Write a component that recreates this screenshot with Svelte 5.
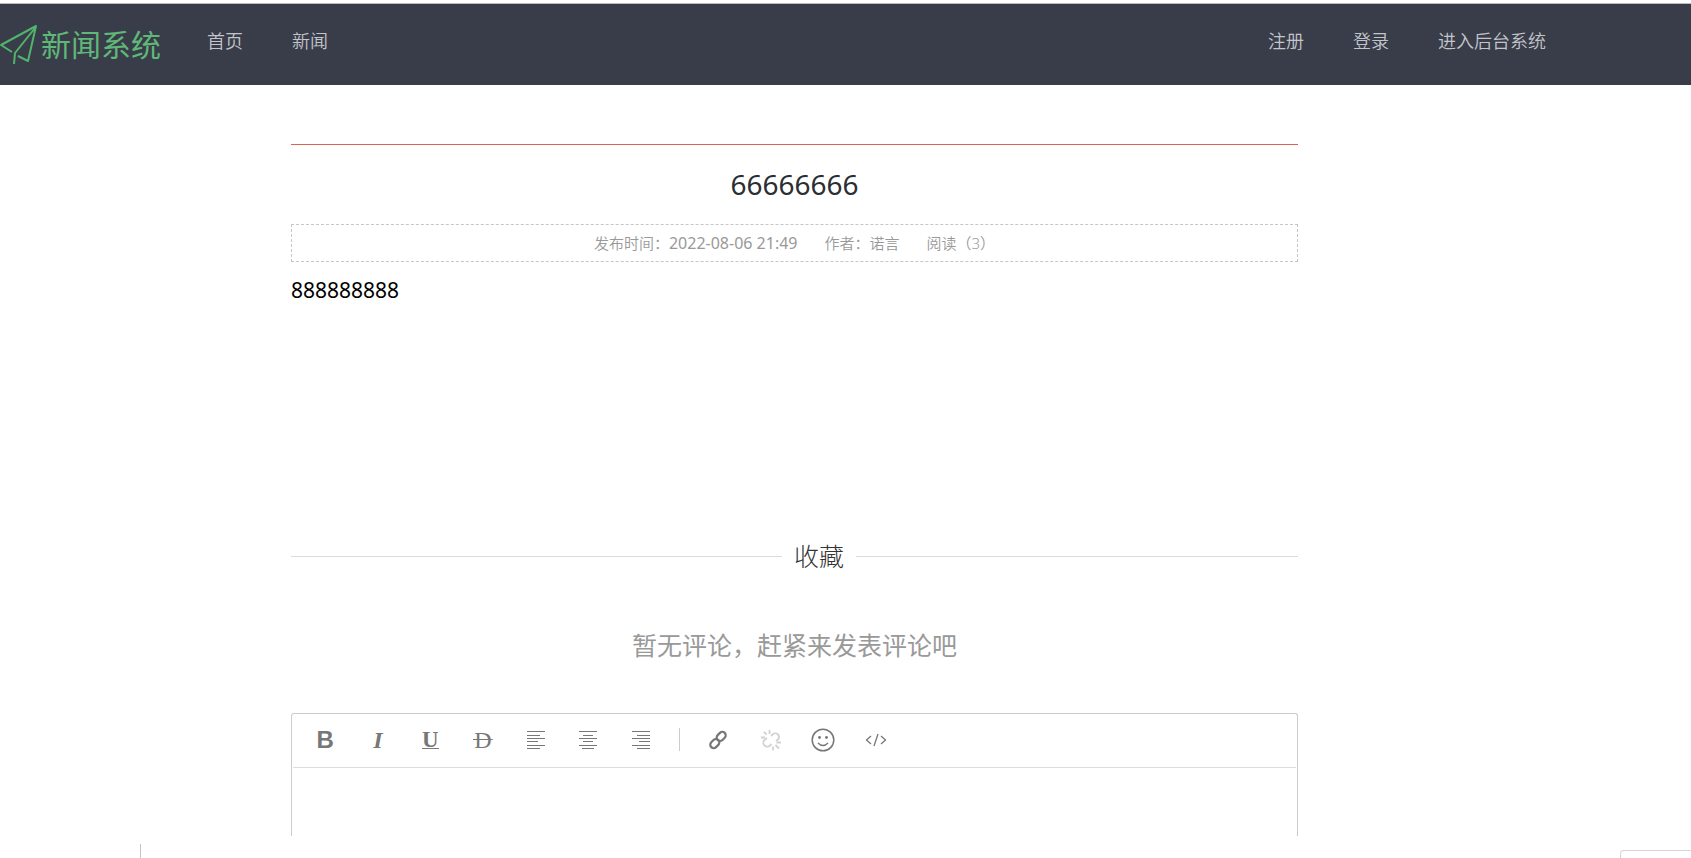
<script>
  const mainLinks = ['首页', '新闻'];
  const userLinks = ['注册', '登录', '进入后台系统'];

  const aligns = [
    { label: '左对齐', rows: [[1, 19], [1, 14], [1, 19], [1, 12], [1, 19], [1, 14]] },
    { label: '居中对齐', rows: [[1, 19], [5, 15], [1, 19], [5, 15], [1, 19], [4, 16]] },
    { label: '右对齐', rows: [[1, 19], [6, 19], [1, 19], [8, 19], [1, 19], [6, 19]] }
  ];

  let draft = $state('');
</script>

<header>
  <a class="logo" href="#home">
    <svg width="38" height="44" viewBox="0 0 38 44" aria-hidden="true">
      <path d="M12 29 L1 22 L36 3 L28 38 L18 33 M35 5 L15 30 L14 41" />
    </svg>
    <span>新闻系统</span>
  </a>
  <nav class="main" aria-label="主导航">
    {#each mainLinks as link}<a href="#nav">{link}</a>{/each}
  </nav>
  <nav class="user" aria-label="用户">
    {#each userLinks as link}<a href="#user">{link}</a>{/each}
  </nav>
</header>

<main>
  <article>
    <h1>66666666</h1>
    <p class="meta">
      <span>发布时间：<time>2022-08-06 21:49</time></span>
      <span>作者：诺言</span>
      <span>阅读（3）</span>
    </p>
    <div class="content">888888888</div>
  </article>

  <div class="divider"><button type="button">收藏</button></div>

  <p class="empty">暂无评论，赶紧来发表评论吧</p>

  <section class="editor" aria-label="评论编辑器">
    <div class="toolbar">
      <div class="group text">
        <button type="button" class="bold" aria-label="加粗">B</button>
        <button type="button" class="italic" aria-label="斜体">I</button>
        <button type="button" class="under" aria-label="下划线"><span>U</span></button>
        <button type="button" class="strike" aria-label="删除线"><span>D</span></button>
        {#each aligns as align}
          <button type="button" aria-label={align.label}>
            <svg width="20" height="20" viewBox="0 0 20 20">
              {#each align.rows as [from, to], i}
                <path class="row" d="M{from} {[1, 5, 8, 11, 15, 18][i]}.5H{to}" />
              {/each}
            </svg>
          </button>
        {/each}
      </div>
      <span class="sep"></span>
      <div class="group insert">
        <button type="button" aria-label="插入链接">
          <svg width="20" height="20" viewBox="0 0 20 20" class="link">
            <rect x="-5" y="-3.4" width="10" height="6.8" rx="3.4" transform="translate(13.2 6.4) rotate(-45)" />
            <rect x="-5" y="-3.4" width="10" height="6.8" rx="3.4" transform="translate(6.8 13.6) rotate(-45)" />
          </svg>
        </button>
        <button type="button" disabled aria-label="取消链接">
          <svg width="22" height="22" viewBox="0 0 22 22" class="unlink">
            <path d="M11 7 L12.500 5.500 C14 4 16.500 4 18 5.500 C19.500 7 19.500 9 18 10.500 L16 12 M7 9 L4.500 11 C3 12.500 3 15 4.500 16.500 C6 18 8.500 18 10 16.500 L11.500 15" />
            <path d="M9.500 1V5 M4 3L6.500 5.500 M1 8.500H5 M16.500 13.500H21 M15.500 16L19 19.500 M13 17.500V21.500" />
          </svg>
        </button>
        <button type="button" aria-label="表情">
          <svg width="24" height="24" viewBox="0 0 24 24" class="smile">
            <circle cx="12" cy="12" r="10.800" />
            <path d="M7 15 Q12 20 17 15" />
            <circle class="eye" cx="8.500" cy="9.500" r="1.400" />
            <circle class="eye" cx="15.500" cy="9.500" r="1.400" />
          </svg>
        </button>
        <button type="button" aria-label="插入代码">
          <svg width="22" height="16" viewBox="0 0 22 16" class="code">
            <path d="M6 4 L1.500 8 L6 12 M16 4 L20.500 8 L16 12 M13 2 L9 14" />
          </svg>
        </button>
      </div>
    </div>
    <textarea aria-label="评论内容" bind:value={draft}></textarea>
  </section>
</main>

<footer>
  <div class="side"></div>
  <div class="corner"></div>
</footer>

<style>
  :global(body) {
    margin: 0;
    background: #fff;
    font-family: 'Noto Sans', 'Noto Sans CJK SC', sans-serif;
  }
  header {
    display: flex;
    align-items: center;
    box-sizing: border-box;
    height: 82px;
    margin-top: 3px;
    padding-right: 145px;
    border-top: 1px solid #b9bbbf;
    background: #393d49;
  }
  a {
    text-decoration: none;
  }
  .logo {
    display: flex;
    align-items: center;
    gap: 3px;
    color: #5fb878;
    font: 400 30px/40px 'Noto Sans CJK SC', sans-serif;
  }
  .logo span {
    padding-bottom: 4px;
  }
  .logo svg {
    fill: none;
    stroke: #4fb56c;
    stroke-width: 2;
    stroke-linejoin: round;
  }
  nav {
    display: flex;
    gap: 49px;
    padding-bottom: 9px;
  }
  nav a {
    color: #c3c5ca;
    font: 350 18px/36px 'Noto Sans CJK SC', sans-serif;
  }
  .main {
    margin-left: 46px;
  }
  .user {
    margin-left: auto;
  }
  main {
    margin: 59px 393px 0 291px;
  }
  article {
    min-height: 386px;
    border-top: 1px solid #d9644f;
  }
  h1 {
    margin: 20px 0;
    color: #2b2e33;
    font-size: 28px;
    font-weight: 400;
    line-height: 39px;
    text-align: center;
  }
  .meta {
    display: flex;
    justify-content: center;
    gap: 27px;
    margin: 0;
    border: 1px dashed #c6c6c6;
    color: #999;
    font: 350 15px/36px 'Noto Sans', 'Noto Sans CJK SC', sans-serif;
  }
  time {
    font-size: 16px;
    font-weight: 400;
  }
  .content {
    margin-top: 13px;
    color: #000;
    font-size: 21px;
    line-height: 30px;
  }
  .divider {
    display: flex;
    align-items: center;
    gap: 12px;
  }
  .divider::before,
  .divider::after {
    flex: 10 1 0;
    height: 1px;
    margin-top: 3px;
    background: #dcdcdc;
    content: '';
  }
  .divider::after {
    flex-grow: 9;
  }
  button {
    padding: 0;
    border: 0;
    background: none;
    color: #777;
  }
  .divider button {
    color: #333;
    font: 300 25px/48px 'Noto Sans CJK SC', sans-serif;
  }
  .empty {
    margin: 41px 0 45px;
    color: #999;
    font: 400 25px/48px 'Noto Sans CJK SC', sans-serif;
    text-align: center;
  }
  .editor {
    border: 1px solid #ccc;
    border-bottom: 0;
    border-radius: 3px 3px 0 0;
  }
  .toolbar {
    display: flex;
    align-items: center;
    gap: 12px;
    box-sizing: border-box;
    height: 54px;
    margin: 0 1px;
    padding: 0 0 2px 6px;
    border-bottom: 1px solid #ddd;
  }
  .group {
    display: grid;
    grid-auto-columns: 1fr;
    grid-auto-flow: column;
  }
  .text {
    width: 368px;
  }
  .insert {
    width: 210px;
  }
  .group button {
    display: flex;
    align-items: center;
    justify-content: center;
    height: 32px;
  }
  .group svg {
    fill: none;
    stroke: #777;
  }
  .sep {
    width: 1px;
    height: 23px;
    background: #ccc;
  }
  .bold {
    font: bold 24px/32px 'Liberation Sans', sans-serif;
  }
  .italic {
    font: italic bold 24px/32px 'Liberation Serif', serif;
  }
  .under {
    font: bold 23px/17px 'Liberation Serif', serif;
  }
  .under span {
    display: block;
    border-bottom: 1px solid #777;
  }
  .strike {
    font: 24px/32px 'Liberation Serif', serif;
  }
  .strike span {
    padding: 0 1px;
    background: linear-gradient(#777, #777) center / 100% 1px no-repeat;
  }
  .group .link {
    stroke-width: 2.2;
  }
  .group .unlink {
    stroke: #d2d2d2;
    stroke-width: 1.8;
  }
  .group .smile {
    stroke-width: 1.5;
  }
  .group .eye {
    fill: #777;
    stroke: none;
  }
  .group .code {
    stroke-width: 1.3;
  }
  textarea {
    display: block;
    box-sizing: border-box;
    width: 100%;
    height: 68px;
    padding: 8px;
    border: 0;
    outline: 0;
    background: none;
    resize: none;
    font: inherit;
  }
  footer {
    display: flex;
    align-items: flex-end;
    justify-content: space-between;
    height: 14px;
    margin-top: 8px;
    overflow: hidden;
  }
  .side {
    width: 140px;
    height: 14px;
    border-right: 1px solid #c4c4c4;
  }
  .corner {
    width: 70px;
    height: 7px;
    border-top: 1px solid #d5d5d5;
    border-left: 1px solid #d5d5d5;
    border-top-left-radius: 4px;
  }
</style>
